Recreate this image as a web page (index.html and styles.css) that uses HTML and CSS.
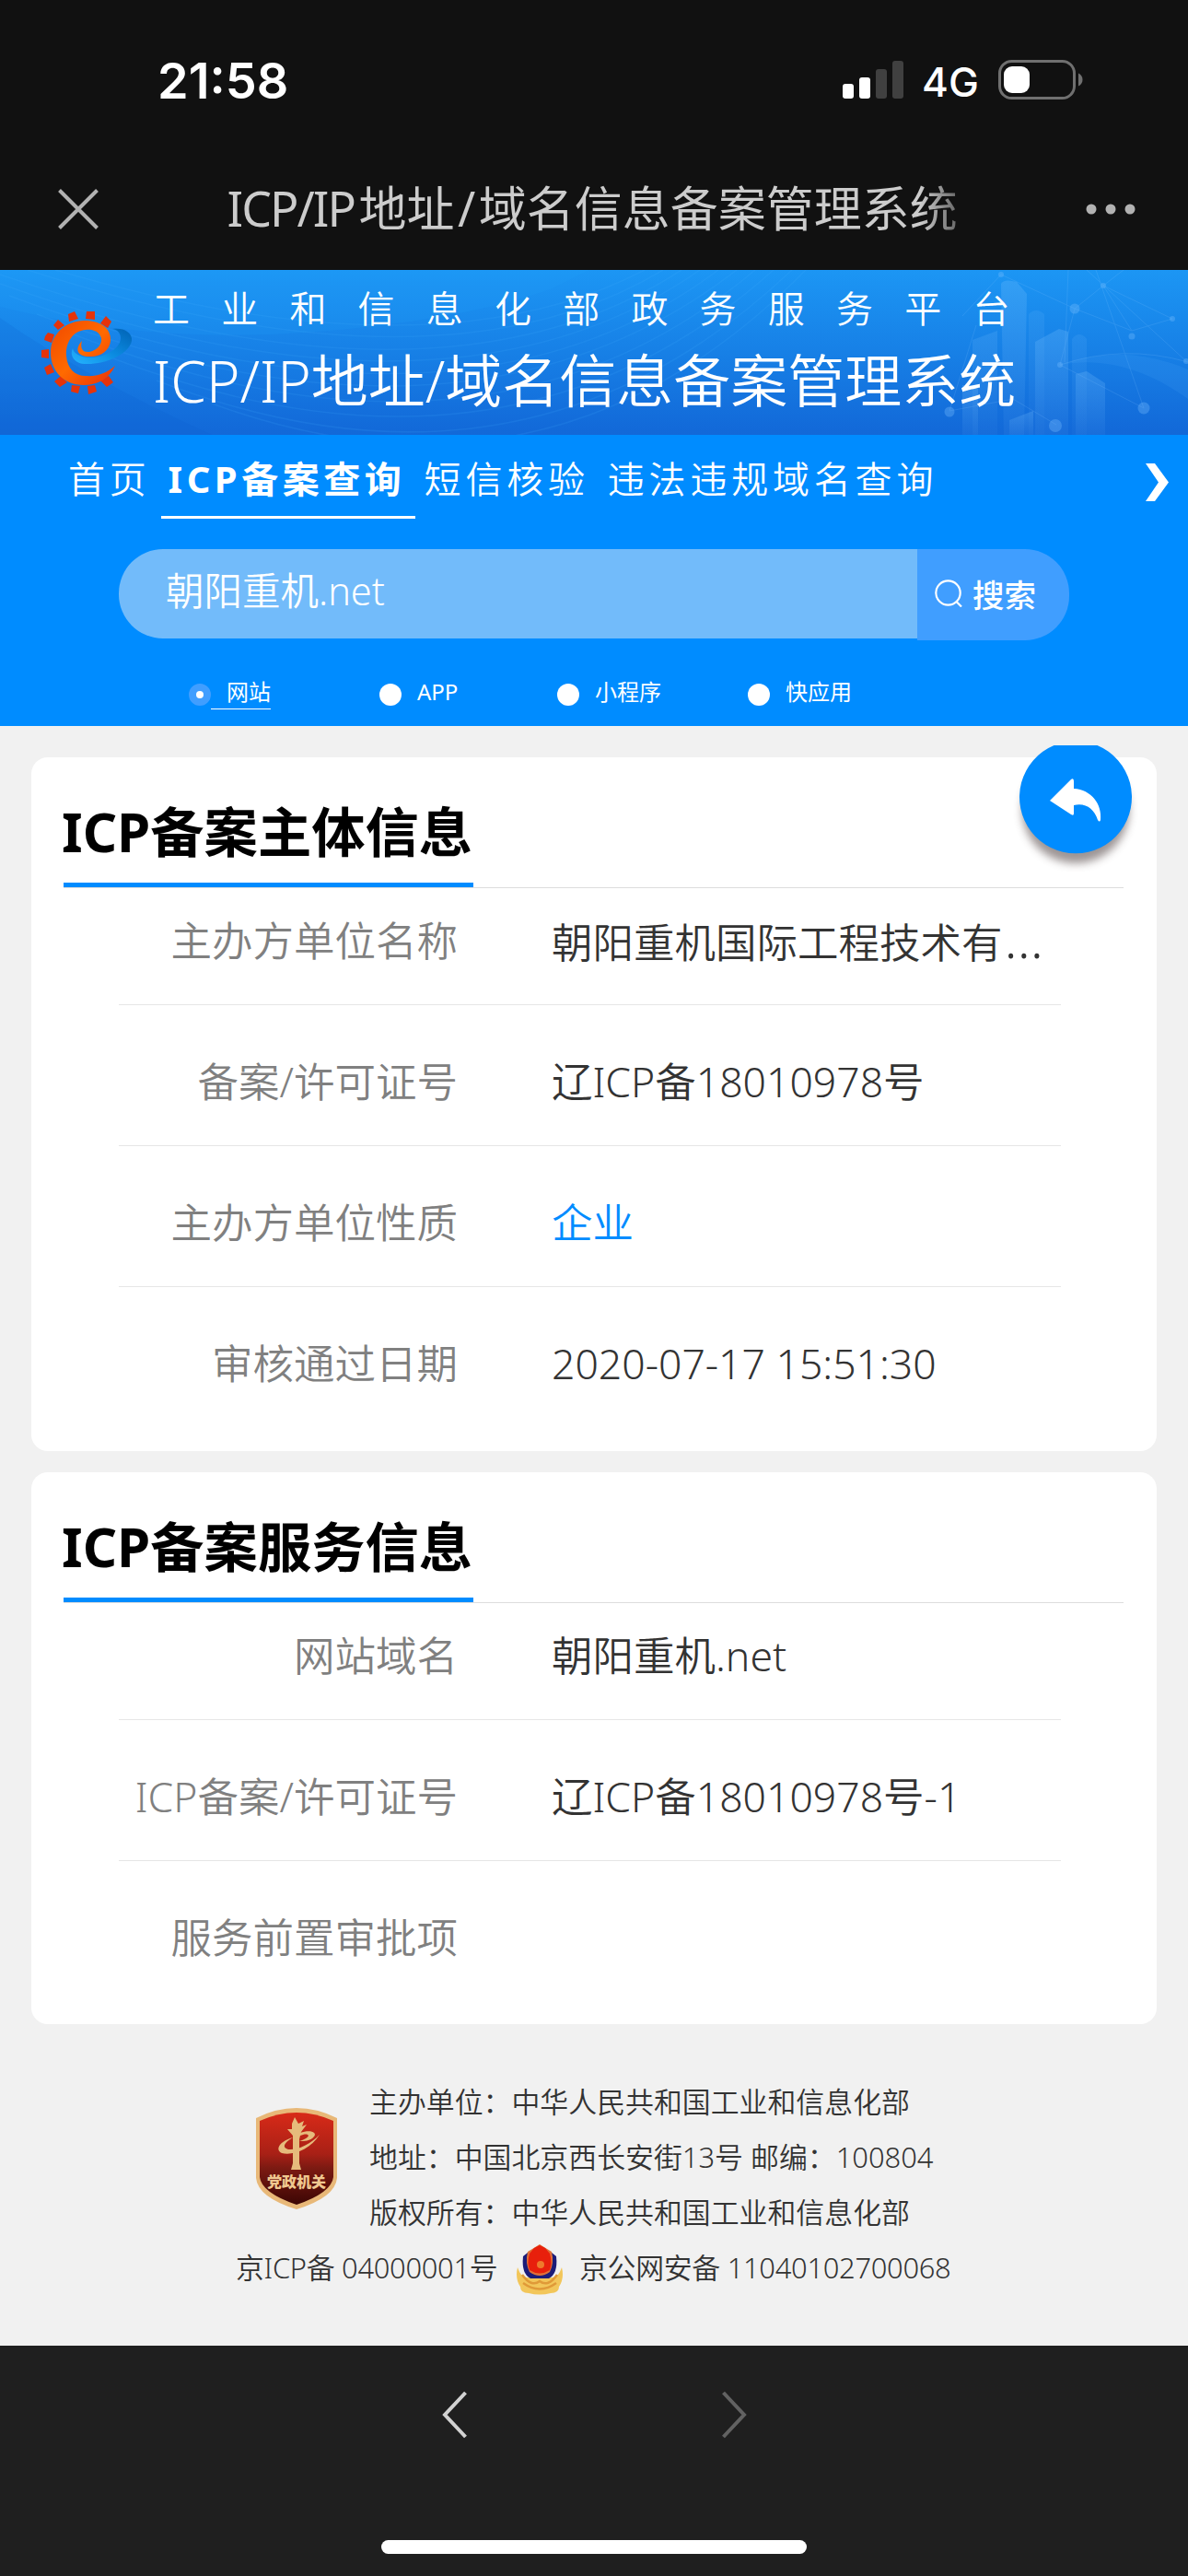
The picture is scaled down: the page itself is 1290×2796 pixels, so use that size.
FILE: index.html
```html
<!DOCTYPE html>
<html lang="zh-CN">
<head>
    <meta charset="UTF-8">
    <meta name="viewport" content="width=device-width, initial-scale=1.0">
    <title>ICP/IP地址/域名信息备案管理系统</title>
    <link rel="stylesheet" href="styles.css">
</head>
<body>
    <!-- Barra de estado -->
    <div class="status-bar">
        <span class="time">21:58</span>
        <div class="status-icons">
            <svg class="signal" viewBox="0 0 66 42" width="66" height="42">
                <rect x="0" y="25" width="12" height="16" rx="3" fill="#fff"/>
                <rect x="18" y="18" width="12" height="23" rx="3" fill="#fff"/>
                <rect x="36" y="9" width="12" height="32" rx="3" fill="#404040"/>
                <rect x="54" y="0" width="12" height="41" rx="3" fill="#404040"/>
            </svg>
            <span class="network">4G</span>
            <svg class="battery" viewBox="0 0 93 44" width="93" height="44">
                <rect x="1.5" y="1.5" width="81" height="40" rx="13" fill="none" stroke="#707070" stroke-width="3"/>
                <rect x="6" y="7" width="28" height="29" rx="9" fill="#fff"/>
                <path d="M87 14.500C93 17 93 26 87 28.500Z" fill="#707070"/>
            </svg>
        </div>
    </div>

    <div class="title-bar">
        <svg class="close" viewBox="0 0 44 44" width="44" height="44">
            <path d="M1.500 1.500L42.500 42.500M42.500 1.500L1.500 42.500" stroke="#b2b2b2" stroke-width="4"/>
        </svg>
        <span class="page-title"><span class="latin">ICP/IP</span> 地址 / 域名信息备案管理系统</span>
        <svg class="more" viewBox="0 0 54 12" width="54" height="12">
            <circle cx="6" cy="6" r="5.500"/>
            <circle cx="27" cy="6" r="5.500"/>
            <circle cx="48" cy="6" r="5.500"/>
        </svg>
    </div>

    <header class="banner">
        <svg class="banner-bg" viewBox="0 0 1290 179" width="1290" height="179">
            <defs>
                <linearGradient id="tower" x1="0" y1="0" x2="0" y2="1">
                    <stop offset="0" stop-color="#7fc4ff" stop-opacity=".24"/>
                    <stop offset="1" stop-color="#7fc4ff" stop-opacity=".06"/>
                </linearGradient>
            </defs>
            <path d="M0 40Q160 80 330 68T600 20L640 0H0Z" fill="#20a0fa" opacity=".18"/>
            <path d="M0 52Q90 115 230 179H0Z" fill="#0b5fd0" opacity=".16"/>
            <g fill="none" stroke="#45b4ff" stroke-width="1.500" opacity=".14">
                <path d="M60 0Q470 120 700 0M30 0Q480 145 720 0M0 5Q480 170 740 0M0 15Q490 190 760 0M10 28Q500 210 780 0M40 48Q510 225 800 0M80 70Q530 245 820 0M120 95Q550 260 840 0M170 120Q570 275 860 0M230 145Q600 280 875 0"/>
            </g>
            <g fill="url(#tower)">
                <path d="M1087 15Q1090 9 1104 13L1115 26L1112 179H1090Z"/>
                <path d="M1117 48Q1125 40 1134 48V179H1117Z" opacity=".5"/>
                <path d="M1056 76L1083 66V179H1056Z" opacity=".7"/>
                <path d="M1124 78L1150 64L1160 67V179H1124Z"/>
                <path d="M1164 75Q1172 65 1180 75V179H1164Z" opacity=".5"/>
                <path d="M1168 113L1180 110L1200 123V179H1168Z"/>
                <path d="M1045 125H1062V179H1045Z"/>
                <path d="M1096 163L1122 153V179H1096Z"/>
            </g>
            <g fill="none" stroke="#8cc8ff" stroke-width="1" opacity=".16">
                <path d="M1045 50L1087 5L1167 42L1198 17L1273 53M1198 17L1229 66L1167 42L1151 103L1242 150M1229 66L1273 53M1180 0L1288 99M1220 0L1198 17M1160 0L1156 100M1031 153L1100 140L1147 168M1190 0L1242 150M1060 60L1031 153"/>
                <path d="M1151 103Q1220 80 1290 100"/>
            </g>
            <path d="M1151 103Q1220 78 1290 108V140Q1220 90 1151 103Z" fill="#5cb4ff" opacity=".12"/>
            <g fill="#7cc0ff" opacity=".32">
                <circle cx="1087" cy="5" r="3"/>
                <circle cx="1167" cy="42" r="5.500"/>
                <circle cx="1198" cy="17" r="3"/>
                <circle cx="1229" cy="72" r="3.500"/>
                <circle cx="1273" cy="53" r="3"/>
                <circle cx="1151" cy="103" r="3"/>
                <circle cx="1242" cy="150" r="6.500"/>
                <circle cx="1146" cy="169" r="7"/>
                <circle cx="1031" cy="154" r="5.500"/>
                <circle cx="1288" cy="99" r="3"/>
            </g>
        </svg>
        <svg class="logo" viewBox="0 0 98 90" width="98" height="90">
            <defs>
                <linearGradient id="ring" x1="0" y1="0" x2="1" y2="1">
                    <stop offset="0" stop-color="#f04800"/>
                    <stop offset=".5" stop-color="#ff6a00"/>
                    <stop offset="1" stop-color="#e83008"/>
                </linearGradient>
                <linearGradient id="swoosh" x1="0" y1="1" x2="1" y2="0">
                    <stop offset="0" stop-color="#25b4ff"/>
                    <stop offset=".5" stop-color="#0b8ae0"/>
                    <stop offset="1" stop-color="#0062b4"/>
                </linearGradient>
            </defs>
            <path d="M29 3L36 0L40 8L30 11ZM49 0H58L58 9L48 8ZM70 5L76 11L72 18L64 13ZM13 15L18 9L25 15L18 20ZM4 27L7 23L14 25L11 34L3 31ZM0 42L8 41V51L0 50ZM3 61L10 57L14 66L6 69ZM14 76L21 70L28 77L20 82ZM33 80L42 81L40 89L32 87ZM50 81L58 80L60 87L51 90ZM64 75L73 70L78 77L71 82Z" fill="#e5330a"/>
            <path d="M77 19C91 17 99 24 98 32C95 47 68 58 47 57C36 57 30 48 34 40C35 47 46 52 62 49C75 46 86 38 86 29C86 24 83 20 77 19Z" fill="url(#swoosh)"/>
            <path d="M80 59C73 74 60 80 46 80C24 80 10 64 10 45C10 25 26 10 47 10C66 10 76 20 75 32C74 43 63 50 52 49C40 49 35 42 44 32C42 39 44 45 52 44C62 42 66 34 65 29C63 21 54 19 48 20C34 21 26 34 27 48C28 62 36 70 48 70C60 71 71 67 80 59Z" fill="url(#ring)"/>
        </svg>
        <div class="banner-text">
            <div class="platform">工业和信息化部政务服务平台</div>
            <div class="system">ICP/IP地址/域名信息备案管理系统</div>
        </div>
    </header>

    <section class="query">
        <nav>
            <ul>
                <li><a href="#">首页</a></li>
                <li><a href="#" class="active">ICP备案查询</a></li>
                <li><a href="#">短信核验</a></li>
                <li><a href="#">违法违规域名查询</a></li>
            </ul>
            <svg class="nav-next" viewBox="0 0 25 41" width="25" height="41">
                <path d="M0 0H10L25 20.500L10 41H0L14 20.500Z" fill="#fff"/>
            </svg>
        </nav>

        <div class="search">
            <div class="search-input">朝阳重机.net</div>
            <div class="search-button">
                <svg viewBox="0 0 30 30" width="30" height="30">
                    <circle cx="14.500" cy="14.500" r="13.200" fill="none" stroke="#fff" stroke-width="2.200"/>
                    <path d="M23.500 24L29 29.500" stroke="#fff" stroke-width="2.200"/>
                </svg>
                <span>搜索</span>
            </div>
        </div>

        <div class="types">
            <div class="type checked"><i></i><span>网站</span></div>
            <div class="type"><i></i><span>APP</span></div>
            <div class="type"><i></i><span>小程序</span></div>
            <div class="type"><i></i><span>快应用</span></div>
        </div>
    </section>

    <main>
        <div class="card">
            <svg class="back" viewBox="0 0 150 150" width="150" height="150">
                <defs>
                    <filter id="shadow" x="-20%" y="-20%" width="140%" height="150%">
                        <feGaussianBlur stdDeviation="5"/>
                    </filter>
                </defs>
                <circle cx="75" cy="70" r="58" fill="#5c5050" opacity=".6" filter="url(#shadow)"/>
                <path d="M51.500 0H98.500A61 61 0 1 1 51.500 0Z" fill="#008cff"/>
                <path d="M47 60L70 37Q73 35 73 39V47C92 48 104 64 102 81Q101 84 99 81C95 69 86 62 73 65V74Q73 77 70 75Z" fill="#fff"/>
            </svg>
            <h3><span>ICP备案主体信息</span></h3>
            <div class="row">
                <label>主办方单位名称</label>
                <p>朝阳重机国际工程技术有<span class="dots">…</span></p>
            </div>
            <div class="row">
                <label>备案/许可证号</label>
                <p>辽ICP备18010978号</p>
            </div>
            <div class="row">
                <label>主办方单位性质</label>
                <p class="blue">企业</p>
            </div>
            <div class="row">
                <label>审核通过日期</label>
                <p>2020-07-17 15:51:30</p>
            </div>
        </div>

        <div class="card">
            <h3><span>ICP备案服务信息</span></h3>
            <div class="row">
                <label>网站域名</label>
                <p>朝阳重机.net</p>
            </div>
            <div class="row">
                <label>ICP备案/许可证号</label>
                <p>辽ICP备18010978号-1</p>
            </div>
            <div class="row">
                <label>服务前置审批项</label>
                <p></p>
            </div>
        </div>
    </main>

    <footer>
        <div class="footer-top">
            <svg class="shield" viewBox="0 0 90 112" width="90" height="112">
                <defs>
                    <linearGradient id="red" x1="0" y1="0" x2="0" y2="1">
                        <stop offset="0" stop-color="#d82a18"/>
                        <stop offset=".45" stop-color="#a82016"/>
                        <stop offset=".6" stop-color="#7c1a12"/>
                        <stop offset="1" stop-color="#3c0604"/>
                    </linearGradient>
                </defs>
                <path d="M1 12Q45 -10 89 12V77Q87 98 45 111Q3 98 1 77Z" fill="#e8b878"/>
                <path d="M5 15Q45 -3 85 15V76Q83 93 45 106Q7 93 5 76Z" fill="url(#red)"/>
                <g fill="#e6bb7c">
                    <path d="M40 18L43 11L47 18L53 15L51 21L56 19L50 27L48 35V61L50 68H39L41 61V31L35 24L40 24Z"/>
                    <path d="M70 30C60 46 41 53 29 50C21 46 27 37 41 33C31 39 29 44 36 46C47 47 60 40 70 30Z"/>
                    <path d="M49 28C59 24 68 27 64 32C60 37 53 37 48 37C55 35 60 31 57 30C55 29 52 30 49 31Z"/>
                </g>
                <text class="shield-text" x="45" y="87" text-anchor="middle">党政机关</text>
            </svg>
            <div class="footer-lines">
                <p>主办单位：中华人民共和国工业和信息化部</p>
                <p>地址：中国北京西长安街13号 邮编：100804</p>
                <p>版权所有：中华人民共和国工业和信息化部</p>
            </div>
        </div>
        <div class="footer-bottom">
            <span>京ICP备 04000001号</span>
            <svg class="police" viewBox="0 0 52 55" width="52" height="55">
                <path d="M2 25Q-1 37 5 46Q5 53 14 53Q26 56 38 53Q47 53 47 46Q53 37 50 25Q46 37 39 36H13Q6 37 2 25Z" fill="#f2c65a"/>
                <path d="M7 33Q17 47 26 40Q35 47 45 33M8 42Q26 55 44 42" fill="none" stroke="#e09a38" stroke-width="2.500"/>
                <path d="M8 13L13 9L26 5L39 9L44 13Q46 32 36 37H16Q6 32 8 13Z" fill="#1c1c78"/>
                <path d="M13 8L18 5L26 0L34 5L39 8Q42 20 37 30Q26 38 15 30Q10 20 13 8Z" fill="#e07038"/>
                <path d="M15 10L20 4L26 1L32 4L37 10Q40 20 37 28Q26 35 15 28Q12 20 15 10Z" fill="#e8200c"/>
                <circle cx="27" cy="22" r="4" fill="#ee7a2c"/>
            </svg>
            <span>京公网安备 11040102700068</span>
        </div>
    </footer>

    <div class="toolbar">
        <div class="toolbar-buttons">
            <svg viewBox="0 0 28 52" width="28" height="52">
                <path d="M25.500 2L3 26L25.500 50" fill="none" stroke="#d2d2d2" stroke-width="4"/>
            </svg>
            <svg viewBox="0 0 28 52" width="28" height="52">
                <path d="M2.500 2L25 26L2.500 50" fill="none" stroke="#626262" stroke-width="4"/>
            </svg>
        </div>
        <div class="home-indicator"></div>
    </div>
</body>
</html>
```
FILE: styles.css
```css
* {
    box-sizing: border-box;
}

body {
    margin: 0;
    width: 1290px;
    height: 2796px;
    display: flex;
    flex-direction: column;
    background: #f1f1f1;
    color: #333;
    font-family: "Noto Sans", "Noto Sans CJK SC", sans-serif;
    overflow: hidden;
}

svg {
    display: block;
    flex-shrink: 0;
}

p, h3, ul {
    margin: 0;
    padding: 0;
}

/* Barra de estado */
.status-bar {
    height: 160px;
    padding: 0 113px 0 171px;
    background: #111;
    color: #fff;
    display: flex;
    justify-content: space-between;
    align-items: flex-start;
    font-family: Inter, sans-serif;
}
.time {
    margin-top: 56px;
    font-size: 54px;
    line-height: 64px;
    font-weight: 600;
}
.status-icons {
    display: flex;
    margin-top: 65px;
}
.signal {
    margin-top: 1px;
}
.network {
    width: 103px;
    padding-left: 20px;
    font-size: 44px;
    line-height: 48px;
    font-weight: 500;
}

.title-bar {
    height: 133px;
    padding: 0 57px 0 63px;
    background: #111;
    display: flex;
    align-items: center;
    justify-content: space-between;
}
.page-title {
    width: 800px;
    margin: -2px 0 0 7px;
    font-size: 52px;
    line-height: 70px;
    word-spacing: -10px;
    white-space: nowrap;
    background: linear-gradient(90deg, #ccc 94%, #555);
    -webkit-background-clip: text;
    color: transparent;
}
.latin {
    margin-right: 1px;
    letter-spacing: -2px;
}
.more {
    fill: #b2b2b2;
}

/* Cabecera */
.banner {
    position: relative;
    height: 179px;
    padding-left: 45px;
    display: flex;
    background: linear-gradient(#1c96f4, #1780e6 50%, #1268d8);
    color: #fff;
}
.banner-bg {
    position: absolute;
    left: 0;
    top: 0;
}
.logo {
    position: relative;
    margin-top: 45px;
}
.banner-text {
    position: relative;
    margin: 14px 0 0 23px;
    font-weight: 350;
    white-space: nowrap;
}
.platform {
    font-size: 40px;
    line-height: 56px;
    letter-spacing: 34.200px;
}
.system {
    margin-top: 5px;
    font-size: 62px;
    line-height: 90px;
}

.query {
    height: 316px;
    background: #008cff;
    color: #fff;
}
nav {
    height: 124px;
    padding: 0 21px 0 64px;
    display: flex;
    justify-content: space-between;
}
nav ul {
    display: flex;
    list-style: none;
}
nav ul li a {
    display: block;
    height: 91px;
    padding: 18px 10px 0;
    color: #fff;
    font-size: 40px;
    font-weight: 350;
    line-height: 60px;
    letter-spacing: 4.800px;
    text-decoration: none;
    white-space: nowrap;
}
nav ul li a.active {
    width: 276px;
    margin-left: 1px;
    padding: 18px 0 0 8px;
    font-weight: bold;
    letter-spacing: 4.500px;
    border-bottom: 3px solid #fff;
}
.nav-next {
    margin-top: 31px;
}

.search {
    display: flex;
    margin-left: 129px;
}
.search-input {
    width: 867px;
    height: 97px;
    padding-left: 51px;
    background: #72bbfa;
    border-radius: 48px 0 0 48px;
    font-size: 41.500px;
    font-weight: 350;
    line-height: 90px;
}
.search-button {
    width: 165px;
    height: 99px;
    padding: 0 0 3px 19px;
    background: #409eff;
    border-radius: 0 48px 48px 0;
    display: flex;
    align-items: center;
    gap: 11px;
    font-size: 34.500px;
    font-weight: 500;
}

.types {
    display: flex;
    margin: 39px 0 0 205px;
    font-size: 24px;
    line-height: 34px;
}
.type {
    display: flex;
}
.type:nth-child(1) {
    width: 207px;
}
.type:nth-child(2) {
    width: 193px;
}
.type:nth-child(3) {
    width: 207px;
}
.type i {
    width: 24px;
    height: 24px;
    margin-top: 8px;
    border-radius: 50%;
    background: #fff;
}
.type span {
    padding-left: 17px;
}
.type.checked i {
    border: 8px solid #409eff;
}
.type.checked span {
    height: 36px;
    border-bottom: 1px solid #fff;
}

/* Tarjetas */
.card {
    position: relative;
    margin: 34px 34px 0;
    height: 753px;
    padding: 30px 36px 0 35px;
    background: #fff;
    border-radius: 18px;
}
.card + .card {
    margin-top: 23px;
    height: 599px;
}
.card h3 {
    display: flex;
    height: 112px;
    border-bottom: 1px solid #ddd;
    color: #000;
    font-size: 58.300px;
    font-weight: bold;
    line-height: 102px;
    text-indent: -2px;
    white-space: nowrap;
}
.card h3 span {
    width: 445px;
    height: 111px;
    border-bottom: 5px solid #008cff;
}
.back {
    position: absolute;
    left: 1059px;
    top: -13px;
}
.row {
    display: flex;
    height: 153px;
    margin: 0 68px 0 60px;
    padding-top: 51px;
    border-bottom: 1px solid #e6e6e6;
    font-size: 44.500px;
    font-weight: 350;
    line-height: 64px;
    white-space: nowrap;
}
h3 + .row {
    height: 127px;
    padding-top: 25px;
}
.row:last-child {
    border-bottom: none;
}
.row label {
    width: 368px;
    text-align: right;
    color: #808080;
}
.row p {
    margin-left: 102px;
}
.row .blue {
    color: #008cff;
}
.dots {
    margin-left: 2px;
    font-size: 58px;
    line-height: 1;
}

/* Pie */
footer {
    height: 349px;
    padding-top: 54px;
    font-size: 30.900px;
    font-weight: 350;
    line-height: 60px;
    white-space: nowrap;
}
.footer-top {
    display: flex;
    padding-left: 277px;
}
.shield {
    margin-top: 36px;
}
.shield-text {
    fill: #f0c890;
    font-size: 16px;
    font-weight: 900;
}
.footer-lines {
    margin-left: 34px;
}
.footer-bottom {
    display: flex;
    margin-left: 256px;
    letter-spacing: -.3px;
}
.footer-bottom span:first-child {
    width: 304px;
}
.police {
    margin: 5px 17px 0 0;
}

.toolbar {
    flex: 1;
    background: #1f1f1f;
}
.toolbar-buttons {
    display: flex;
    gap: 275px;
    padding: 49px 0 0 480px;
}
.home-indicator {
    width: 462px;
    height: 15px;
    margin: 110px auto 0;
    border-radius: 8px;
    background: #fff;
}
```
